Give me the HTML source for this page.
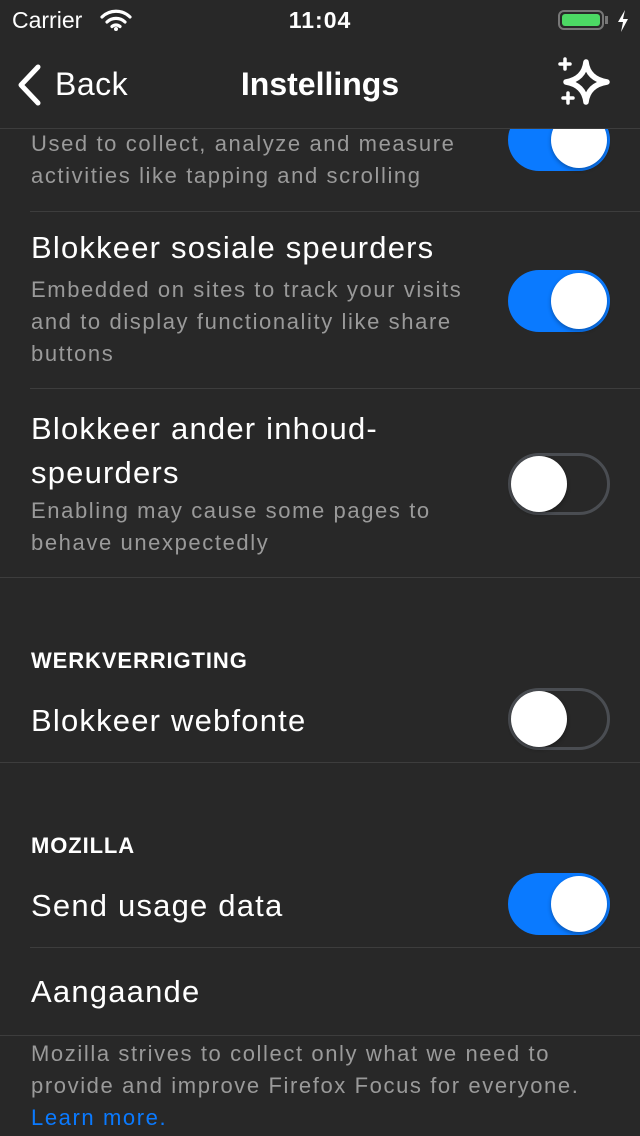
<!DOCTYPE html><html><head><style>
body{margin:0;width:640px;height:1136px;background:#282828;font-family:"Liberation Sans",sans-serif;position:relative;overflow:hidden;color:#fff}
.a{position:absolute}
.t{font-size:31px;left:31px;letter-spacing:1.2px}
.s{font-size:22px;color:#9a9a9a;left:31px;line-height:32px;letter-spacing:1.6px}
.h{font-size:22px;left:31px;font-weight:bold;letter-spacing:0.9px}
.sep{position:absolute;height:1px;background:#3d3d3d;right:0}
.tg{position:absolute;left:508px;width:102px;height:62px;border-radius:31px;box-sizing:border-box}
.on{background:#0a7aff}
.off{border:3px solid #4a4d52;background:#282828}
.k{position:absolute;width:56px;height:56px;border-radius:50%;background:#fff;top:3px;box-shadow:0 2px 4px rgba(0,0,0,.3)}
.on .k{left:43px}.off .k{left:0;top:0}
</style></head><body>
<div class="a s" style="top:128px">Used to collect, analyze and measure<br>activities like tapping and scrolling</div>
<div class="tg on" style="top:109px"><div class="k"></div></div>
<div class="sep" style="top:211px;left:30px"></div>
<div class="a t" style="top:230px">Blokkeer sosiale speurders</div>
<div class="a s" style="top:274px">Embedded on sites to track your visits<br>and to display functionality like share<br>buttons</div>
<div class="tg on" style="top:270px"><div class="k"></div></div>
<div class="sep" style="top:388px;left:30px"></div>
<div class="a t" style="top:407px;line-height:44px">Blokkeer ander inhoud-<br>speurders</div>
<div class="a s" style="top:495px">Enabling may cause some pages to<br>behave unexpectedly</div>
<div class="tg off" style="top:453px"><div class="k"></div></div>
<div class="sep" style="top:577px;left:0"></div>
<div class="a h" style="top:648px">WERKVERRIGTING</div>
<div class="a t" style="top:703px">Blokkeer webfonte</div>
<div class="tg off" style="top:688px"><div class="k"></div></div>
<div class="sep" style="top:762px;left:0"></div>
<div class="a h" style="top:833px">MOZILLA</div>
<div class="a t" style="top:888px">Send usage data</div>
<div class="tg on" style="top:873px"><div class="k"></div></div>
<div class="sep" style="top:947px;left:30px"></div>
<div class="a t" style="top:974px">Aangaande</div>
<div class="sep" style="top:1035px;left:0"></div>
<div class="a s" style="top:1038px">Mozilla strives to collect only what we need to<br>provide and improve Firefox Focus for everyone.<br><span style="color:#0a7aff">Learn more.</span></div>
<div class="a" style="top:0;left:0;width:640px;height:128px;background:#282828;border-bottom:1px solid #3d3d3d"></div>
<div class="a" style="top:7px;left:12px;font-size:23px">Carrier</div>
<svg class="a" style="left:100px;top:9px" width="32" height="22" viewBox="0 0 32 22"><path d="M2 8a20 20 0 0 1 28 0M7 13a13 13 0 0 1 18 0M12 17.5a6 6 0 0 1 8 0" stroke="#fff" stroke-width="3.2" fill="none" stroke-linecap="round"/><circle cx="16" cy="20" r="2" fill="#fff"/></svg>
<div class="a" style="top:7px;left:0;width:640px;text-align:center;font-size:23px;font-weight:bold;letter-spacing:1px">11:04</div>
<div class="a" style="left:558px;top:10px;width:46px;height:20px;border:2px solid #777;border-radius:6px;box-sizing:border-box;padding:2px"><div style="background:#4cd964;height:100%;border-radius:3px"></div></div>
<div class="a" style="left:605px;top:16px;width:3px;height:8px;background:#777"></div>
<svg class="a" style="left:616px;top:10px" width="14" height="22" viewBox="0 0 14 22"><path d="M9 0L2 12h5l-2 10 7-13H7z" fill="#fff"/></svg>
<svg class="a" style="left:16px;top:64px" width="28" height="42" viewBox="0 0 28 42"><path d="M22 3L5 21l17 18" stroke="#fff" stroke-width="5" fill="none" stroke-linecap="round" stroke-linejoin="round"/></svg>
<div class="a" style="top:66px;left:55px;font-size:32px;letter-spacing:0.5px">Back</div>
<div class="a" style="top:66px;left:0;width:640px;text-align:center;font-size:32px;font-weight:bold">Instellings</div>
<svg class="a" style="left:556px;top:56px" width="56" height="52" viewBox="0 0 56 52"><path d="M30 6Q32 23 51 26Q32 29 30 46Q28 29 10 26Q28 23 30 6Z" stroke="#fff" stroke-width="5.5" fill="none" stroke-linejoin="round"/><path d="M9 3v10M4 8h10M12 37v10M7 42h10" stroke="#fff" stroke-width="3.5" stroke-linecap="round"/></svg>
</body></html>
